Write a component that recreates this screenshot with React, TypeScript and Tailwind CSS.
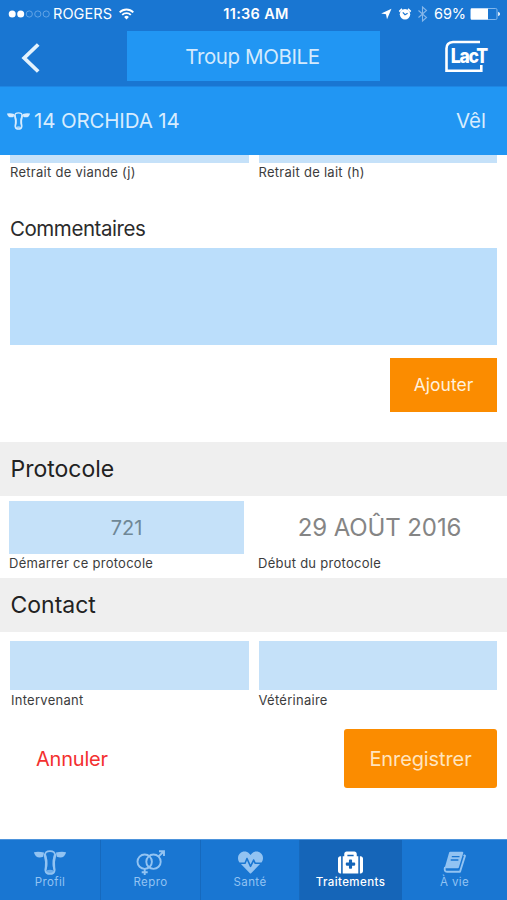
import type { ReactNode } from "react";
import clsx from "clsx";
import { FaHeartbeat, FaMedkit } from "react-icons/fa";

const fieldClass = "block w-full rounded-none bg-[#c5e1f9] text-center outline-none";
const captionClass =
  "block whitespace-nowrap pt-px text-[13px] leading-4 tracking-[0.27px] text-[#3c3c3c]";

function SignalDots() {
  return (
    <svg width="42" height="10" viewBox="0 0 42 10" className="ml-[8px]">
      <circle cx="4.2" cy="5" r="3.5" fill="#fff" />
      <circle cx="12.7" cy="5" r="3.5" fill="#fff" />
      {[21.3, 29.8, 38.2].map((cx) => (
        <circle key={cx} cx={cx} cy="5" r="3.1" fill="none" stroke="#6aa8e6" strokeWidth="0.9" />
      ))}
    </svg>
  );
}

function WifiIcon() {
  return (
    <svg width="15" height="12" viewBox="0 0 15 12" className="ml-[7px]" fill="none" stroke="#fff" strokeWidth="1.9">
      <path d="M0.7 4.3a9.6 9.6 0 0 1 13.6 0" />
      <path d="M3.2 6.9a6.1 6.1 0 0 1 8.6 0" />
      <path d="M5.1 9a3.4 3.4 0 0 1 4.8 0L7.5 11.4Z" fill="#fff" stroke="none" />
    </svg>
  );
}

function StatusIcons() {
  return (
    <svg width="48" height="18" viewBox="0 0 48 18" className="mr-[6px]">
      <path d="M11.5 3.8 7 14.2 6 9.3 1.2 8.4Z" fill="#fff" />
      <circle cx="25" cy="9.3" r="5.2" fill="#fff" />
      <path d="M19.3 6.6 22 3.9M30.7 6.6 28 3.9" stroke="#fff" strokeWidth="1.6" />
      <path d="M22.8 7.3 25 9.7 27.6 8.2" fill="none" stroke="#1976d2" strokeWidth="1.2" />
      <path d="M38.5 5.5 46.5 12.5 42.5 16V2L46.5 5.5 38.5 12.5" fill="none" stroke="#86b7ea" strokeWidth="1.1" />
    </svg>
  );
}

function Battery() {
  return (
    <svg width="30" height="12" viewBox="0 0 30 12" className="ml-[4px] mr-[7px]">
      <rect x="0.5" y="0.5" width="26.5" height="11" rx="1.3" fill="none" stroke="#8dbdee" strokeWidth="0.9" />
      <path d="M1 0.5H18V11.5H1Z" fill="#fff" />
      <path d="M28.2 3.8Q30 4.5 30 6T28.2 8.2Z" fill="#fff" />
    </svg>
  );
}

function LactLogo() {
  return (
    <svg width="46" height="34" viewBox="0 0 46 34" className="text-white">
      <path d="M36 3H9Q2.5 3.5 2.5 9.500V31.700H37.300V26" fill="none" stroke="currentColor" strokeWidth="2.600" />
      <text
        x="6.800"
        y="23.500"
        fill="currentColor"
        fontFamily="Inter, sans-serif"
        fontWeight="800"
        fontSize="20"
        letterSpacing="-1.500"
        textLength="36"
        lengthAdjust="spacingAndGlyphs"
      >
        LacT
      </text>
    </svg>
  );
}

function CowIcon({ className }: Readonly<{ className?: string }>) {
  return (
    <svg viewBox="0 0 32 25" className={className} fill="currentColor">
      <path d="M0 2.2Q4.5 1.2 10 2.6L9.2 6.8Q4.5 8.3 2 6.2Q.2 4.5 0 2.2Z" />
      <path d="M32 2.2Q27.5 1.2 22 2.6L22.8 6.8Q27.5 8.3 30 6.2Q31.8 4.5 32 2.2Z" />
      <path
        d="M16 1.2C12.5 1.2 11 2.5 11.2 4.7C11.6 8 12.4 10 12.3 14C12.2 17 11.1 19 11.6 21.2C12 23 13.5 23.9 16 23.9S20 23 20.4 21.2C20.9 19 19.8 17 19.7 14C19.6 10 20.4 8 20.8 4.7C21 2.5 19.5 1.2 16 1.2Z"
        fill="none"
        stroke="currentColor"
        strokeWidth="1.8"
      />
      <path d="M9.5 3.2 12 5 13.4 10V16L12.5 20 10.7 20.5 11 12Z" />
      <path d="M22.5 3.2 20 5 18.6 10V16L19.5 20 21.3 20.5 21 12Z" />
      <path d="M12.2 20.5Q16 18.8 19.8 20.5L19 23.4H13Z" opacity="0.7" />
    </svg>
  );
}

function ReproIcon() {
  return (
    <svg width="30" height="25" viewBox="0 0 30 25" fill="none" stroke="currentColor" strokeWidth="1.9">
      <circle cx="8.7" cy="11.7" r="7.2" />
      <circle cx="17.5" cy="11.7" r="7.2" />
      <path d="M8.7 19V25M5.7 22.200H11.700M22.500 6.500 27.700 1.500M23 1.200H28V6" />
    </svg>
  );
}

function BookIcon() {
  return (
    <svg width="24" height="23" viewBox="0 0 24 23" fill="none" stroke="currentColor">
      <path d="M7.200 1.800H19.200L14.800 16.200H3Z" fill="currentColor" strokeWidth="2.200" strokeLinejoin="round" />
      <path d="M2 16Q.8 20.800 4 20.800H17L22 4.800L20.600 4" strokeWidth="1.900" strokeLinejoin="round" />
      <path d="M8.800 5.700H16.500M7.700 9H15.400" stroke="#1976d2" strokeWidth="1.300" />
    </svg>
  );
}

function Tab({ icon, label, active }: Readonly<{ icon: ReactNode; label: string; active?: boolean }>) {
  return (
    <button
      type="button"
      className={clsx(
        "flex flex-col items-center border-r pt-[10px] last:border-r-0",
        active ? "border-[#1565b8] bg-[#1565b8] text-white" : "border-[#1669bd] text-[#92c3f2]",
      )}
    >
      <span className="flex h-[25px] items-center">{icon}</span>
      <span
        className={clsx(
          "text-[11.5px] leading-[15px] tracking-[0.4px]",
          active && "font-medium",
        )}
      >
        {label}
      </span>
    </button>
  );
}

function SectionTitle({ children }: Readonly<{ children: ReactNode }>) {
  return (
    <h2 className="h-[54px] bg-[#efefef] pl-[10.5px] text-[23px] leading-[54px] text-[#222]">
      {children}
    </h2>
  );
}

export default function App() {
  return (
    <div className="flex h-[900px] w-[507px] flex-col overflow-hidden bg-white font-['Inter','Liberation_Sans',sans-serif]">
      <header className="h-[86px] shrink-0 bg-[#1976d2] text-white">
        <div className="grid h-[28px] grid-cols-[1fr_auto_1fr] items-center text-[14.5px]">
          <div className="flex items-center">
            <SignalDots />
            <span className="ml-[3px] tracking-[0.1px]">ROGERS</span>
            <WifiIcon />
          </div>
          <span className="pl-[5px] font-semibold tracking-[0.3px]">11:36 AM</span>
          <div className="flex items-center justify-end">
            <StatusIcons />
            <span className="tracking-[-0.1px]">69%</span>
            <Battery />
          </div>
        </div>
        <div className="flex items-start justify-between pt-[3px]">
          <button type="button" aria-label="Retour" className="w-[127px] pl-[20px] pt-[11px]">
            <svg width="22" height="32" viewBox="0 0 22 32" fill="none" stroke="#e3f2fd" strokeWidth="3.8">
              <path d="M18.2 2.5 4.2 16 18.2 29.5" />
            </svg>
          </button>
          <h1 className="h-[50px] w-[253px] bg-[#2196f3] pr-[2px] text-center text-[20.5px] leading-[51px] tracking-[-0.4px] text-[#d3eafd]">
            Troup MOBILE
          </h1>
          <div className="flex w-[127px] justify-end pr-[17px] pt-[8px]">
            <LactLogo />
          </div>
        </div>
      </header>

      <div className="flex h-[69px] shrink-0 items-center border-t border-[#1e86e3] bg-[#2196f3] pl-[7px] pr-[21px] text-[20.5px] text-[#d7ecfe]">
        <CowIcon className="h-[18px] w-[23px]" />
        <span className="ml-[4px] tracking-[-0.15px]">14 ORCHIDA 14</span>
        <span className="ml-auto">Vêl</span>
      </div>

      <main className="flex-1">
        <div className="grid grid-cols-2 gap-x-[10px] px-[10px]">
          <div>
            <div className="h-[8px] bg-[#c5e1f9]" />
            <p className={captionClass}>Retrait de viande (j)</p>
          </div>
          <div>
            <div className="h-[8px] bg-[#c5e1f9]" />
            <p className={captionClass}>Retrait de lait (h)</p>
          </div>
        </div>

        <div className="flex flex-col px-[10px] pt-[35px]">
          <label htmlFor="comments" className="text-[20.5px] leading-7 tracking-[-0.45px] text-[#2b2b2b]">
            Commentaires
          </label>
          <textarea id="comments" className="mt-[5px] h-[97px] w-full resize-none bg-[#bbdefb] outline-none" />
          <button type="button" className="mt-[13px] h-[54px] w-[107px] self-end bg-[#fb8c00] text-[17.5px] text-[#fff0dc]">
            Ajouter
          </button>
        </div>

        <div className="mt-[30px]">
          <SectionTitle>Protocole</SectionTitle>
          <div className="grid h-[82px] grid-cols-[235px_1fr] gap-x-[14px] pl-[9px] pr-[10px] pt-[5px]">
            <label>
              <input readOnly value="721" className={clsx(fieldClass, "h-[53px] text-[20px] text-[#6f8796]")} />
              <span className={captionClass}>Démarrer ce protocole</span>
            </label>
            <div>
              <div className="h-[53px] pl-[4px] text-center text-[24px] leading-[54px] tracking-[-0.1px] text-[#858585]">
                29 AOÛT 2016
              </div>
              <p className={captionClass}>Début du protocole</p>
            </div>
          </div>
        </div>

        <SectionTitle>Contact</SectionTitle>
        <div className="grid grid-cols-2 gap-x-[10px] px-[10px] pt-[9px]">
          <label>
            <input className={clsx(fieldClass, "mb-px h-[49px]")} />
            <span className={clsx(captionClass, "pl-px")}>Intervenant</span>
          </label>
          <label>
            <input className={clsx(fieldClass, "mb-px h-[49px]")} />
            <span className={captionClass}>Vétérinaire</span>
          </label>
        </div>

        <div className="mt-[21px] flex items-center justify-between pl-[36px] pr-[10px]">
          <button type="button" className="text-[20px] tracking-[-0.2px] text-[#f3302f]">
            Annuler
          </button>
          <button
            type="button"
            className="h-[59px] w-[153px] rounded-[3px] bg-[#fb8c00] text-[20px] tracking-[-0.1px] text-[#ffe4bf]"
          >
            Enregistrer
          </button>
        </div>
      </main>

      <nav className="grid h-[61px] shrink-0 grid-cols-[101px_100px_99px_102px_1fr] border-t border-[#4d94dc] bg-[#1976d2]">
        <Tab icon={<CowIcon className="h-[25px] w-[32px]" />} label="Profil" />
        <Tab icon={<ReproIcon />} label="Repro" />
        <Tab icon={<FaHeartbeat size={25} />} label="Santé" />
        <Tab icon={<FaMedkit size={25} />} label="Traitements" active />
        <Tab icon={<BookIcon />} label="À vie" />
      </nav>
    </div>
  );
}
